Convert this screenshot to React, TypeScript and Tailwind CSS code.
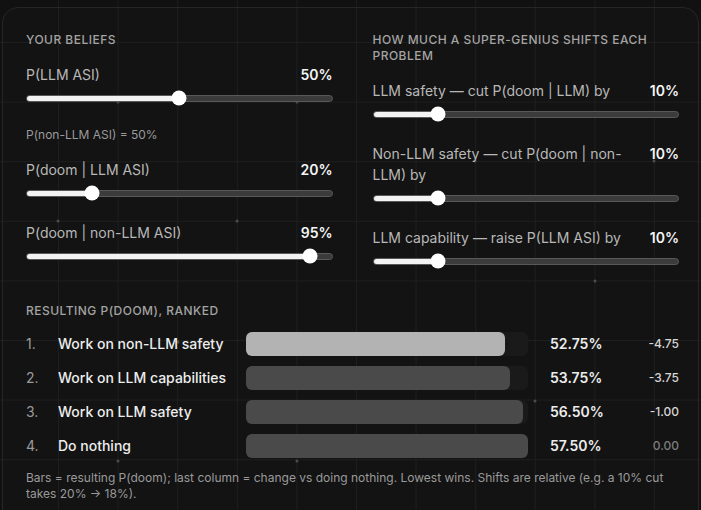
const beliefs = [
  { label: 'P(LLM ASI)', value: 50, max: 100 },
  { label: 'P(doom | LLM ASI)', value: 20, max: 100 },
  { label: 'P(doom | non-LLM ASI)', value: 95, max: 100 },
];

const shifts = [
  { label: 'LLM safety — cut P(doom | LLM) by', value: 10, max: 50 },
  { label: 'Non-LLM safety — cut P(doom | non-LLM) by', value: 10, max: 50 },
  { label: 'LLM capability — raise P(LLM ASI) by', value: 10, max: 50 },
];

const results = [
  { name: 'Work on non-LLM safety', p: 52.75, delta: '-4.75' },
  { name: 'Work on LLM capabilities', p: 53.75, delta: '-3.75' },
  { name: 'Work on LLM safety', p: 56.5, delta: '-1.00' },
  { name: 'Do nothing', p: 57.5, delta: '0.00' },
];

const dots = [
  [118, 102], [297, 102], [58, 221], [237, 221], [475, 161], [654, 161],
  [595, 281], [178, 342], [356, 341], [535, 401], [297, 461], [118, 461],
];

function Slider({ value, max }: { value: number; max: number }) {
  const pos = `calc(7.5px + ${value / max} * (100% - 15px))`;
  return (
    <div className="relative mt-[5px] flex h-4 items-center">
      <div className="relative h-[7px] w-full overflow-hidden rounded-full border border-[#595959] bg-[#3b3b3b]">
        <div className="absolute inset-y-0 left-0 bg-[#f3f3f3]" style={{ width: pos }} />
      </div>
      <div
        className="absolute top-1/2 h-[15px] w-[15px] -translate-x-1/2 -translate-y-1/2 rounded-full bg-white"
        style={{ left: pos }}
      />
    </div>
  );
}

function Control({ label, value, max }: { label: string; value: number; max: number }) {
  return (
    <div>
      <div className="flex items-start justify-between gap-5 text-sm leading-[21px]">
        <span className="text-[#b8b8b8]">{label}</span>
        <span className="shrink-0 font-semibold text-[#f5f5f5]">{value}%</span>
      </div>
      <Slider value={value} max={max} />
    </div>
  );
}

function SectionLabel({ children }: { children: string }) {
  return <h2 className="text-xs font-medium uppercase leading-4 tracking-[0.04em] text-[#a3a3a3]">{children}</h2>;
}

export default function App() {
  const worst = Math.max(...results.map((r) => r.p));
  return (
    <div className="relative h-[510px] w-[701px] overflow-hidden bg-[#111111] bg-[linear-gradient(to_right,#1c1c1c_1px,transparent_1px),linear-gradient(to_bottom,#1c1c1c_1px,transparent_1px)] bg-[size:59.6px_59.6px] bg-[position:58px_42px] pt-[7px] font-['Inter',sans-serif] antialiased">
      {dots.map(([x, y]) => (
        <span key={`${x}-${y}`} className="absolute h-[3px] w-[3px] -translate-x-1/2 -translate-y-1/2 rounded-full bg-[#4a4a4a]" style={{ left: x, top: y }} />
      ))}
      <div className="relative mx-[2px] h-[560px] rounded-2xl border border-[#262626] bg-[#ffffff03] pl-[23px] pr-[19px] pt-[24px]">
        <div className="grid grid-cols-2 gap-10">
          <section>
            <SectionLabel>Your beliefs</SectionLabel>
            <div className="mt-[16px]">
              <Control {...beliefs[0]} />
            </div>
            <p className="mt-[21px] text-xs leading-4 text-[#9a9a9a]">P(non-LLM ASI) = 50%</p>
            <div className="mt-[16px]">
              <Control {...beliefs[1]} />
            </div>
            <div className="mt-[21px]">
              <Control {...beliefs[2]} />
            </div>
          </section>
          <section>
            <SectionLabel>How much a super-genius shifts each problem</SectionLabel>
            <div className="mt-[16px] flex flex-col gap-[21px]">
              {shifts.map((s) => (
                <Control key={s.label} {...s} />
              ))}
            </div>
          </section>
        </div>

        <section className="mt-[34px]">
          <SectionLabel>Resulting P(doom), ranked</SectionLabel>
          <div className="mt-[13px] flex flex-col gap-[10px]">
            {results.map((r, i) => (
              <div key={r.name} className="flex h-6 items-center text-sm">
                <span className="w-8 text-[#9a9a9a]">{i + 1}.</span>
                <span className="w-[188px] font-medium text-[#ededed]">{r.name}</span>
                <div className="h-6 w-[282px] rounded-md bg-[#1a1a1a]">
                  <div
                    className={`h-full rounded-md ${i === 0 ? 'bg-[#b3b3b3]' : 'bg-[#4a4a4a]'}`}
                    style={{ width: `${(r.p / worst) * 100}%` }}
                  />
                </div>
                <span className="ml-[22px] font-semibold text-[#ececec]">{r.p.toFixed(2)}%</span>
                <span className={`ml-auto text-xs font-medium ${r.delta === '0.00' ? 'text-[#7d7d7d]' : 'text-[#d6d6d6]'}`}>
                  {r.delta}
                </span>
              </div>
            ))}
          </div>
          <p className="mt-3 text-xs leading-4 text-[#9a9a9a]">
            Bars = resulting P(doom); last column = change vs doing nothing. Lowest wins. Shifts are relative (e.g. a 10% cut takes 20% → 18%).
          </p>
        </section>
      </div>
    </div>
  );
}
